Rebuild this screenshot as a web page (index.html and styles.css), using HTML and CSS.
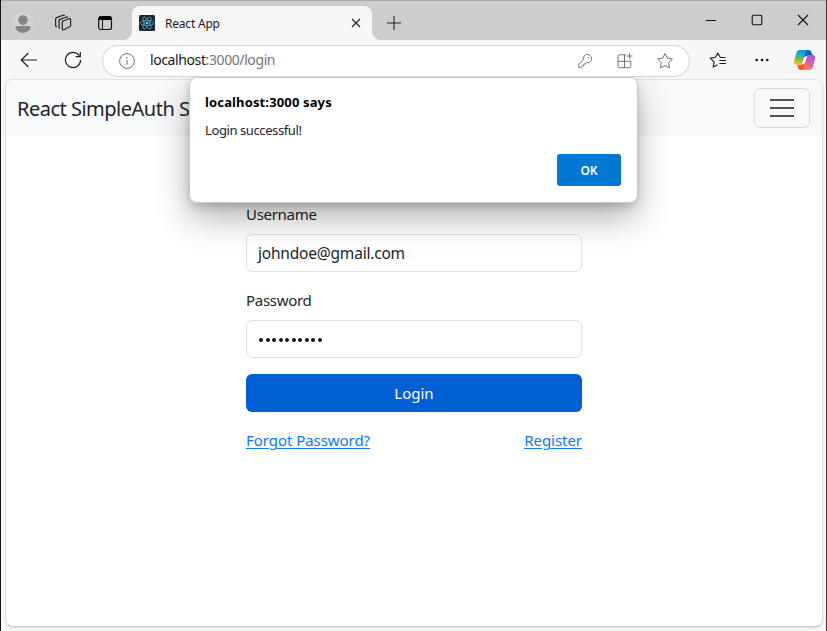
FILE: index.html
```html
<!DOCTYPE html>
<html lang="en">
<head>
<meta charset="utf-8">
<title>React App</title>
<link rel="stylesheet" href="styles.css">
</head>
<body>
<div class="window">
  <header class="titlebar">
    <svg class="avatar" width="20" height="20" viewBox="0 0 20 20"><circle cx="10" cy="10" r="9.7" fill="#d3d2d1" stroke="#dddcdb" stroke-width=".7"/><circle cx="10" cy="7.1" r="4.8" fill="#858585"/><path d="M2.300 15.200c0-1.400 1-2.200 2.400-2.200h10.600c1.400 0 2.400.8 2.400 2.200-1.500 2.800-4.400 4.700-7.700 4.700s-6.200-1.900-7.700-4.700z" fill="#858585"/></svg>
    <svg class="workspaces" width="18" height="18" viewBox="0 0 18 18" fill="none" stroke="#242424" stroke-width="1.200" stroke-linejoin="round"><path d="M8.300 7.300 15.200 4.800q1.400-.4 1.400 1v5.500q0 1-1 1.400l-5.800 3q-1.500.6-1.500-1z"/><path d="M5.800 14.500 5 14V6.800q0-1 1-1.400L12.500 3q1.100-.3 1.400.7M3 12.800 1.600 12V5q0-1 1-1.400L9 1.200q1.200-.3 1.600.7"/></svg>
    <svg class="tabmenu" width="16" height="16" viewBox="0 0 16 16"><rect x="1.700" y="1.700" width="12.800" height="12.800" rx="2.300" fill="none" stroke="#111" stroke-width="1.200"/><path d="M1.700 4.500V4q0-2.300 2.300-2.300h8.200q2.300 0 2.300 2.300v.5z" fill="#000" stroke="#000"/><path d="M5.500 5v9.500" stroke="#222" stroke-width="1.100"/></svg>
    <div class="tab">
      <svg width="16" height="16" viewBox="0 0 16 16"><rect width="16" height="16" rx="1.500" fill="#20242a"/><g fill="none" stroke="#4aa9c1" stroke-width=".8"><ellipse cx="8" cy="8" rx="6.800" ry="2.600"/><ellipse cx="8" cy="8" rx="6.800" ry="2.600" transform="rotate(60 8 8)"/><ellipse cx="8" cy="8" rx="6.800" ry="2.600" transform="rotate(120 8 8)"/></g><circle cx="8" cy="8" r="1.300" fill="#61dafb"/></svg>
      <span class="tab-title">React App</span>
      <svg class="tab-close" width="10" height="10" viewBox="0 0 10 10"><path d="m1 1 8 8M9 1 1 9" stroke="#222" stroke-width="1.200"/></svg>
    </div>
    <svg class="newtab" width="14" height="14" viewBox="0 0 14 14"><path d="M7 0v14M0 7h14" stroke="#222" stroke-width="1.100"/></svg>
    <div class="controls">
      <svg width="12" height="12" viewBox="0 0 12 12"><path d="M1 6.500h10" stroke="#111"/></svg>
      <svg width="12" height="12" viewBox="0 0 12 12"><rect x="1.200" y="1.200" width="9.600" height="9.600" rx="1.500" fill="none" stroke="#111" stroke-width="1.100"/></svg>
      <svg width="12" height="12" viewBox="0 0 12 12"><path d="m1 1 10 10M11 1 1 11" stroke="#111" stroke-width="1.100"/></svg>
    </div>
  </header>

  <div class="toolbar">
    <svg class="back" width="18" height="16" viewBox="0 0 18 16" fill="none" stroke="#222" stroke-width="1.200"><path d="M17 8H1.500M8.300 1 1.300 8l7 7"/></svg>
    <svg class="reload" width="18" height="18" viewBox="0 0 18 18" fill="none" stroke="#222" stroke-width="1.200"><path d="M16.600 9A7.600 7.600 0 1 1 15.300 4.700M16.300 1v4.700h-4.700"/></svg>
    <div class="address">
      <svg width="16" height="16" viewBox="0 0 16 16"><circle cx="8" cy="8" r="7.400" fill="none" stroke="#737373"/><path d="M8 7v4.700" stroke="#737373" stroke-width="1.100"/><circle cx="8" cy="4.700" r=".8" fill="#737373"/></svg>
      <span class="url">localhost<span class="path">:3000/login</span></span>
      <svg class="key" width="16" height="16" viewBox="0 0 16 16" fill="none" stroke="#777" stroke-linejoin="round"><path d="M6.300 6.500a4.200 4.200 0 1 1 3.200 3.200l-1.300 1.200H7v1.400H5.700v1.300L5 14.300H1.700v-3.100z"/><circle cx="11.400" cy="4.600" r=".7" fill="#777" stroke="none"/></svg>
      <svg class="apps" width="16" height="16" viewBox="0 0 16 16" fill="none" stroke="#737373"><path d="M8.800 1.800H2.500Q1 1.800 1 3.300v9.900q0 1.500 1.500 1.500h9.800q1.500 0 1.500-1.500V8.300H1M7.500 1.800v12.900M12.500 0v6M9.500 3h6"/></svg>
      <svg class="star" width="18" height="18" viewBox="0 0 18 18" fill="none" stroke="#737373" stroke-linejoin="round"><path d="m9 1.500 2.300 4.700 5.200.8-3.800 3.700.9 5.200L9 13.500l-4.600 2.400.9-5.200L1.500 7l5.200-.8z"/></svg>
    </div>
    <svg class="favorites" width="18" height="18" viewBox="0 0 18 18" fill="none" stroke="#222" stroke-width="1.150" stroke-linejoin="round" stroke-linecap="round"><path d="M16 6.500h-4.700L8.800 2 6.500 6.300l-5.300.8 3.900 3.700-.9 5.300L8.300 14M10.800 9.500h5.700M10.800 12.500h5.700"/></svg>
    <svg class="more" width="14" height="4" viewBox="0 0 14 4" fill="#111"><circle cx="1.700" cy="2" r="1.300"/><circle cx="7" cy="2" r="1.300"/><circle cx="12.300" cy="2" r="1.300"/></svg>
    <svg class="copilot" width="23" height="22" viewBox="0 0 23 22">
      <defs>
        <linearGradient id="left" x1=".6" y1="0" x2=".4" y2="1"><stop offset="0" stop-color="#1593ea"/><stop offset=".35" stop-color="#2baac4"/><stop offset=".65" stop-color="#82ba44"/><stop offset="1" stop-color="#f0c915"/></linearGradient>
        <linearGradient id="right" x1=".6" y1="0" x2=".3" y2="1"><stop offset="0" stop-color="#a957e8"/><stop offset=".5" stop-color="#e4589d"/><stop offset="1" stop-color="#ff8b64"/></linearGradient>
        <linearGradient id="top" x1="0" y1="0" x2="1" y2="1"><stop offset="0" stop-color="#087fe0"/><stop offset="1" stop-color="#123a9e"/></linearGradient>
      </defs>
      <path d="M12 1h3.700c1.600 0 2.300.9 2.700 2.300L19.300 6h-3c-1.700 0-2.500.8-3 2.300L11 8z" fill="url(#top)"/>
      <path d="M11 21H7.700C6 21 5.300 20 4.900 18.500L4.200 15.700h3c1.600 0 2.300-.8 2.800-2.300l2.200.6z" fill="#f15b32"/>
      <path d="M6.500 1h8c-1.200.5-1.800 1.600-2.200 3L9.500 13.400c-.5 1.500-1.200 2.300-2.800 2.300H3.500c-2.200 0-3-1.800-2.400-4L3.300 4C3.800 2.200 4.600 1 6.500 1z" fill="url(#left)"/>
      <path d="M16.300 6h3.300c2.200 0 3 1.700 2.400 4l-2.200 7.700c-.6 2-1.500 3.300-3.400 3.300H8.800c1.300-.5 1.800-1.600 2.200-3l2.500-9.700C14 6.800 14.600 6 16.300 6z" fill="url(#right)"/>
      <path d="m12.700 7.500 1 .2-3 7.300-1.200-.5z" fill="#fff" stroke="#fff" stroke-width=".8" stroke-linejoin="round"/>
    </svg>
  </div>

  <main class="page">
    <nav class="navbar">
      <span class="brand">React SimpleAuth S</span>
      <button class="toggler" aria-label="Menu"><svg width="24" height="20" viewBox="0 0 24 20"><path d="M0 2h24M0 10h24M0 18h24" stroke="#4f5254" stroke-width="1.900"/></svg></button>
    </nav>
    <form class="login">
      <label for="user">Username</label>
      <div class="field"><span class="email" id="user">johndoe@gmail.com</span></div>
      <label for="pass">Password</label>
      <div class="field" id="pass"><span class="dots"><i></i><i></i><i></i><i></i><i></i><i></i><i></i><i></i><i></i><i></i></span></div>
      <button class="submit" type="button">Login</button>
      <div class="links"><a class="forgot" href="#">Forgot Password?</a><a class="register" href="#">Register</a></div>
    </form>
  </main>
  <div class="shade"><div class="shadow"></div></div>
  <section class="dialog">
    <h1>localhost:3000 says</h1>
    <p>Login successful!</p>
    <button>OK</button>
  </section>
</div>
</body>
</html>
```
FILE: styles.css
```css
* { box-sizing: border-box; }
html, body { margin: 0; height: 100%; overflow: hidden; }
body { font-family: "Noto Sans", "Open Sans", sans-serif; color: #212529; }
svg { display: block; flex: none; }
button { font-family: inherit; }
.window { position: relative; width: 827px; height: 631px; background: #f7f7f7; border-left: 1px solid #181416; border-right: 1px solid #38383a; display: flex; flex-direction: column; }
.titlebar { height: 40px; flex: none; display: flex; align-items: flex-start; background: #cdcdcd; border-top: 1px solid #aaa; }
.avatar { margin: 12px 0 0 12px; }
.workspaces { margin: 13px 0 0 21px; }
.tabmenu { margin: 14px 0 0 25px; }
.tab { position: relative; width: 240px; height: 34px; margin: 5px 0 0 19px; border-radius: 8px 8px 0 0; background: #f7f7f7; display: flex; align-items: center; padding: 0 11px 0 7px; }
.tab::before, .tab::after { content: ""; position: absolute; bottom: 0; width: 8px; height: 8px; }
.tab::before { left: -8px; background: radial-gradient(circle at 0 0, #cdcdcd 7.500px, #f7f7f7 8px); }
.tab::after { right: -8px; background: radial-gradient(circle at 100% 0, #cdcdcd 7.500px, #f7f7f7 8px); }
.tab-title { margin-left: 10px; font-size: 12px; letter-spacing: -.2px; color: #1b1b1b; }
.tab-close { margin-left: auto; }
.newtab { margin: 15px 0 0 15px; }
.controls { display: flex; gap: 34px; margin: 13px 17px 0 auto; }
.toolbar { height: 39px; flex: none; display: flex; align-items: center; }
.back { margin-left: 19px; }
.reload { margin-left: 26px; }
.address { width: 588px; height: 32px; margin: 2px 0 0 20px; border: 1px solid #d4d4d4; border-radius: 16px; background: #fff; display: flex; align-items: center; padding: 0 15px 0 16px; }
.url { margin-left: 15px; font-size: 14px; line-height: 20px; letter-spacing: -.4px; color: #1b1b1b; white-space: nowrap; position: relative; top: -1px; }
.path { color: #767676; }
.key { margin-left: auto; }
.apps { margin-left: 24px; }
.star { margin-left: 23px; }
.favorites { margin-left: 19px; }
.more { margin-left: 28px; }
.copilot { margin-left: 24px; }
.page { width: 818px; height: 548px; margin-left: 4px; border: 1px solid #e3e3e3; border-bottom-color: #ccc; border-radius: 8px; background: #fff; overflow: hidden; box-shadow: 0 1px 2px #ddd; }
.navbar { height: 56px; background: #f8f9fa; display: flex; align-items: center; justify-content: space-between; padding: 0 12px 0 11px; }
.brand { padding-top: 2px; font-size: 20px; line-height: 30px; letter-spacing: -.5px; white-space: nowrap; }
.toggler { width: 56px; height: 40px; padding: 0; border: 1px solid #d9dbdc; border-radius: 6px; background: transparent; display: grid; place-items: center; }
.login { width: 336px; margin: 66px 0 0 240px; font-size: 16px; line-height: 24px; }
.login label { display: block; margin-bottom: 8px; font-size: 15px; letter-spacing: -.3px; }
.field { height: 38px; margin-bottom: 16px; border: 1px solid #dee2e6; border-radius: 6px; padding: 0 11px; display: flex; align-items: center; }
.email { font-size: 15.500px; letter-spacing: -.2px; }
.dots { display: flex; gap: 2.500px; margin: 2px 0 0 1px; }
.dots i { width: 4px; height: 4px; border-radius: 50%; background: #151719; }
.submit { display: block; width: 336px; height: 38px; padding: 0; border: 0; border-radius: 6px; background: #005fd3; color: #fff; font-size: 15px; }
.links { display: flex; justify-content: space-between; margin-top: 16px; font-size: 15px; letter-spacing: -.05px; }
.links a { color: #087bf5; text-underline-offset: 2px; text-decoration-thickness: 1px; }
.shade { position: absolute; left: 4px; top: 77px; width: 818px; height: 550px; overflow: hidden; pointer-events: none; }
.shadow { width: 448px; height: 126px; margin-left: 184px; border-radius: 8px; box-shadow: 0 15px 34px rgba(0,0,0,.3), 0 3px 10px rgba(0,0,0,.18); }
.dialog { position: absolute; left: 187.500px; top: 76.500px; width: 449px; height: 126px; border: 1px solid #c9c9c9; border-radius: 8px; background: #fff; padding: 14.500px 15.500px; display: flex; flex-direction: column; }
.dialog h1 { margin: 0; font-size: 13px; line-height: 20px; font-weight: 700; color: #000; letter-spacing: .14px; }
.dialog p { margin: 8px 0 0; font-size: 13px; line-height: 20px; letter-spacing: -.4px; }
.dialog button { width: 64px; height: 32px; margin: 14px 0 0 auto; padding: 0; flex: none; border: 0; border-radius: 3px; background: #0078d4; color: #fff; font-size: 12px; font-weight: 600; }
```
